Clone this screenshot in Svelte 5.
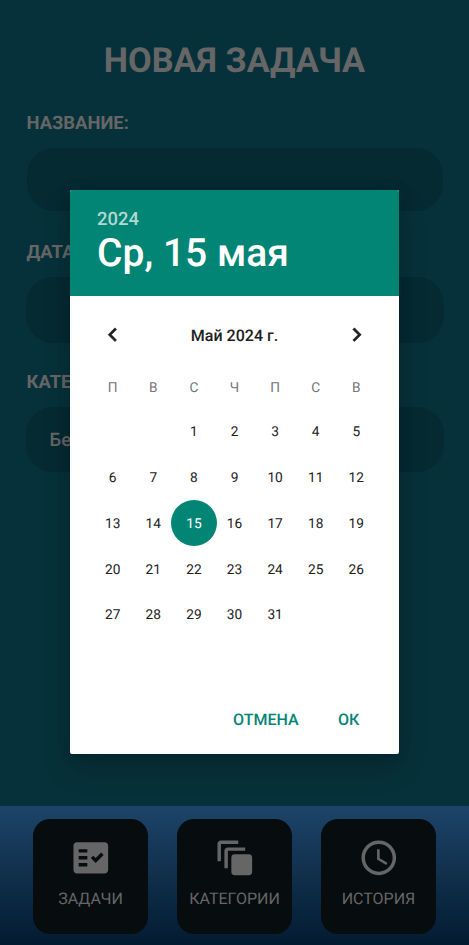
<script>
  const weekdays = ['П', 'В', 'С', 'Ч', 'П', 'С', 'В'];
  const offset = 2;
  const selected = 15;
  const days = [...Array(offset).fill(null), ...Array.from({ length: 31 }, (_, i) => i + 1)];
</script>

<div class="screen">
  <main>
    <h1>НОВАЯ ЗАДАЧА</h1>
    <section>
      <h2>НАЗВАНИЕ:</h2>
      <div class="field name"></div>
    </section>
    <section>
      <h2>ДАТА</h2>
      <div class="field"></div>
    </section>
    <section>
      <h2>КАТЕ</h2>
      <div class="field">Бе</div>
    </section>
  </main>

  <nav>
    <div class="tab">
      <svg viewBox="0 0 24 24">
        <path fill-rule="evenodd" d="M20 3H4c-1.1 0-2 .9-2 2v14c0 1.1.9 2 2 2h16c1.1 0 2-.9 2-2V5c0-1.1-.9-2-2-2zM10 17H5v-2h5v2zm0-4H5v-2h5v2zm0-4H5V7h5v2zm4.820 6L12 12.160l1.410-1.410 1.410 1.420L17.990 9l1.420 1.420L14.820 15z" />
      </svg>
      <span>ЗАДАЧИ</span>
    </div>
    <div class="tab">
      <svg viewBox="0 0 24 24">
        <rect x="10" y="10" width="12" height="12" rx="2" />
        <path d="M6 18V8c0-1.100.9-2 2-2h10v2H8v10zM2 14V4c0-1.100.9-2 2-2h10v2H4v10z" />
      </svg>
      <span>КАТЕГОРИИ</span>
    </div>
    <div class="tab">
      <svg viewBox="0 0 24 24">
        <path d="M11.990 2C6.470 2 2 6.480 2 12s4.470 10 9.990 10C17.520 22 22 17.520 22 12S17.520 2 11.990 2zM12 20c-4.420 0-8-3.580-8-8s3.580-8 8-8 8 3.580 8 8-3.580 8-8 8zm.5-13H11v6l5.250 3.150.75-1.230-4.500-2.670z" />
      </svg>
      <span>ИСТОРИЯ</span>
    </div>
  </nav>

  <div class="dialog">
    <header>
      <div class="year">2024</div>
      <div class="date">Ср, 15 мая</div>
    </header>
    <div class="month">
      <svg viewBox="0 0 24 24"><path d="M15.410 7.410 14 6l-6 6 6 6 1.410-1.410L10.830 12z" /></svg>
      <span>Май 2024 г.</span>
      <svg viewBox="0 0 24 24"><path d="M8.590 16.590 10 18l6-6-6-6-1.410 1.410L13.170 12z" /></svg>
    </div>
    <div class="grid weekdays">
      {#each weekdays as day}<span>{day}</span>{/each}
    </div>
    <div class="grid days">
      {#each days as day}
        <span class:selected={day === selected}>{day ?? ''}</span>
      {/each}
    </div>
    <footer>
      <span>ОТМЕНА</span>
      <span>ОК</span>
    </footer>
  </div>
</div>

<style>
  :global(body) {
    margin: 0;
  }
  .screen {
    position: relative;
    display: flex;
    flex-direction: column;
    width: 469px;
    height: 945px;
    overflow: hidden;
    background: #07313a;
    color: #666;
    font-family: Roboto, sans-serif;
    text-rendering: geometricPrecision;
  }
  main {
    flex: 1;
    padding: 41px 25.5px 0;
  }
  h1 {
    margin: 0;
    text-align: center;
    font-size: 34.3px;
    line-height: 40px;
    font-weight: 700;
  }
  section {
    height: 129.3px;
  }
  h1 + section {
    margin-top: 31px;
  }
  h2 {
    margin: 0 0 13px 1px;
    font-size: 18.4px;
    line-height: 23px;
    font-weight: 700;
  }
  .field {
    box-sizing: border-box;
    height: 65.5px;
    padding-left: 24px;
    border-radius: 27px;
    background: #052a32;
    font-size: 18.5px;
    line-height: 67px;
    font-weight: 500;
  }
  .field.name {
    height: 63px;
    margin: 0 1px;
  }
  nav {
    display: flex;
    justify-content: center;
    gap: 29px;
    height: 126.5px;
    padding-top: 12.5px;
    background: linear-gradient(#1d4468, #031b30);
  }
  .tab {
    display: flex;
    flex-direction: column;
    align-items: center;
    width: 115px;
    height: 115px;
    border-radius: 17px;
    background: #070d0f;
  }
  .tab svg {
    width: 41.6px;
    height: 41.6px;
    margin-top: 18.6px;
    fill: #666;
  }
  .tab span {
    margin-top: 10.8px;
    font-size: 16px;
    line-height: 20px;
  }
  .dialog {
    position: absolute;
    left: 69.6px;
    top: 190.2px;
    display: flex;
    flex-direction: column;
    width: 329.8px;
    height: 564.2px;
    border-radius: 2px;
    background: #fff;
    color: #212121;
    box-shadow: 0 14px 28px rgba(0, 0, 0, 0.2), 0 0 16px rgba(0, 0, 0, 0.08);
  }
  header {
    box-sizing: border-box;
    height: 106px;
    padding: 19px 27.5px 0;
    border-radius: 2px 2px 0 0;
    background: #038576;
    color: #fff;
    font-weight: 500;
  }
  .year {
    font-size: 18.4px;
    line-height: 22px;
    color: #b0d9d4;
  }
  .date {
    font-size: 39px;
    line-height: 44px;
  }
  .month {
    display: flex;
    align-items: center;
    justify-content: space-between;
    height: 28px;
    margin-top: 25px;
    padding: 0 29px;
    font-size: 16px;
    font-weight: 500;
  }
  .month svg {
    width: 27.4px;
    height: 27.4px;
    fill: #212121;
    stroke: #212121;
    stroke-width: 0.5;
  }
  .grid {
    display: grid;
    grid-template-columns: repeat(7, 40.6px);
    justify-content: center;
    justify-items: center;
    font-size: 13.7px;
  }
  .weekdays {
    margin-top: 29px;
    line-height: 20px;
    color: #757575;
  }
  .days {
    margin-top: 10px;
  }
  .days span {
    width: 45.8px;
    height: 45.8px;
    border-radius: 50%;
    text-align: center;
    line-height: 48.6px;
  }
  .days .selected {
    background: #038576;
    color: #fff;
  }
  footer {
    display: flex;
    justify-content: flex-end;
    gap: 39.5px;
    margin-top: auto;
    padding: 0 40px 24px 0;
    font-size: 16px;
    line-height: 20px;
    font-weight: 500;
    color: #038576;
  }
</style>
